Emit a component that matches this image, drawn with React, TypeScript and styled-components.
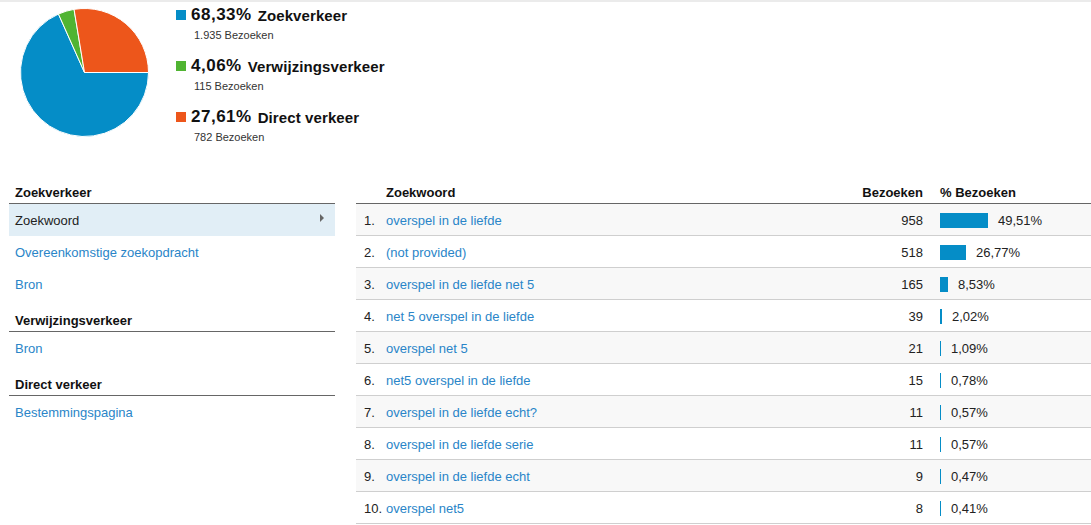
import React from 'react'
import styled, { createGlobalStyle } from 'styled-components'

const Colors = {
  blue: '#058dc7',
  green: '#50b432',
  orange: '#ed561b',
  link: '#2a85c8',
  text: '#222',
  rule: '#666',
  rowRule: '#cfcfcf',
  stripe: '#f8f8f8',
  selected: '#e1eef6',
}

const GlobalStyle = createGlobalStyle`
  html, body {
    margin: 0;
    padding: 0;
    background: #fff;
  }
  body {
    font-family: "Liberation Sans", Arial, sans-serif;
    font-size: 13px;
    color: ${Colors.text};
    border-top: 2px solid #ebebeb;
  }
`

const Page = styled.div`
  width: 1091px;
`

const Overview = styled.section`
  display: flex;
  gap: 27px;
  height: 170px;
  padding: 3px 0 0 20px;
  box-sizing: border-box;
`

const PieBox = styled.svg`
  margin-top: 3px;
  flex: none;
`

const Legend = styled.ul`
  list-style: none;
  margin: 0;
  padding: 0;
  display: flex;
  flex-direction: column;
  gap: 14px;
`

const LegendItem = styled.li`
  display: flex;
  flex-direction: column;
`

const LegendTitle = styled.div`
  display: flex;
  align-items: center;
  gap: 5px;
  height: 20px;
  font-weight: bold;
  color: #111;
`

const Swatch = styled.span<{ $color: string }>`
  width: 10px;
  height: 10px;
  background: ${(p) => p.$color};
`

const Percent = styled.span`
  font-size: 17px;
  letter-spacing: 0.5px;
  margin-right: 1px;
`

const Label = styled.span`
  font-size: 15px;
  letter-spacing: 0.1px;
`

const LegendSub = styled.div`
  margin-top: 3px;
  padding-left: 18px;
  font-size: 11px;
  line-height: 14px;
  color: #333;
`

const Main = styled.div`
  display: flex;
  gap: 21px;
  padding-left: 9px;
`

const Sidebar = styled.nav`
  width: 326px;
  flex: none;
`

const GroupHeader = styled.div`
  height: 32px;
  display: flex;
  align-items: flex-end;
  padding: 0 0 2px 6px;
  box-sizing: border-box;
  line-height: 16px;
  font-weight: bold;
  color: #111;
  border-bottom: 1px solid ${Colors.rule};
`

const NavItem = styled.div<{ $active?: boolean }>`
  height: 32px;
  box-sizing: border-box;
  padding: 1px 11px 0 6px;
  display: flex;
  justify-content: space-between;
  align-items: center;
  color: ${(p) => (p.$active ? Colors.text : Colors.link)};
  background: ${(p) => (p.$active ? Colors.selected : 'transparent')};
`

const Caret = styled.span`
  width: 0;
  height: 0;
  border-top: 4px solid transparent;
  border-bottom: 4px solid transparent;
  border-left: 4px solid #666;
  margin-top: -5px;
`

const Table = styled.div`
  flex: 1;
`

const Row = styled.div<{ $head?: boolean; $odd?: boolean }>`
  display: grid;
  grid-template-columns: 30px 1fr 100px 151px;
  height: 32px;
  box-sizing: border-box;
  align-items: ${(p) => (p.$head ? 'end' : 'center')};
  padding: ${(p) => (p.$head ? '0 0 2px' : '2px 0 0')};
  line-height: 16px;
  background: ${(p) => (p.$odd ? Colors.stripe : '#fff')};
  border-bottom: 1px solid ${(p) => (p.$head ? Colors.rule : Colors.rowRule)};
  font-weight: ${(p) => (p.$head ? 'bold' : 'normal')};
  color: ${(p) => (p.$head ? '#111' : Colors.text)};
`

const Index = styled.span`
  padding-left: 8px;
  white-space: nowrap;
`

const Keyword = styled.span`
  color: ${Colors.link};
`

const Visits = styled.span`
  text-align: right;
  padding-right: 17px;
`

const Share = styled.span`
  display: flex;
  align-items: center;
  gap: 10px;
`

const Bar = styled.span`
  height: 15px;
  margin-top: -1px;
  background: ${Colors.blue};
  flex: none;
`

const slices = [
  { value: 68.33, color: Colors.blue },
  { value: 4.06, color: Colors.green },
  { value: 27.61, color: Colors.orange },
]

const Pie: React.FC = () => {
  const cx = 64.5
  const cy = 64.5
  const r = 64
  let start = 0
  return (
    <PieBox width={129} height={129} viewBox="0 0 129 129">
      {slices.map((s) => {
        const a0 = (start / 100) * Math.PI * 2
        start += s.value
        const a1 = (start / 100) * Math.PI * 2
        const large = a1 - a0 > Math.PI ? 1 : 0
        const d = `M${cx},${cy} L${cx + r * Math.cos(a0)},${cy + r * Math.sin(a0)} A${r},${r} 0 ${large} 1 ${cx + r * Math.cos(a1)},${cy + r * Math.sin(a1)} Z`
        return <path key={s.color} d={d} fill={s.color} stroke="#fff" strokeWidth={1} />
      })}
    </PieBox>
  )
}

const legend = [
  { pct: '68,33%', label: 'Zoekverkeer', visits: '1.935 Bezoeken', color: Colors.blue },
  { pct: '4,06%', label: 'Verwijzingsverkeer', visits: '115 Bezoeken', color: Colors.green },
  { pct: '27,61%', label: 'Direct verkeer', visits: '782 Bezoeken', color: Colors.orange },
]

const keywords = [
  { kw: 'overspel in de liefde', visits: 958, pct: 49.51 },
  { kw: '(not provided)', visits: 518, pct: 26.77 },
  { kw: 'overspel in de liefde net 5', visits: 165, pct: 8.53 },
  { kw: 'net 5 overspel in de liefde', visits: 39, pct: 2.02 },
  { kw: 'overspel net 5', visits: 21, pct: 1.09 },
  { kw: 'net5 overspel in de liefde', visits: 15, pct: 0.78 },
  { kw: 'overspel in de liefde echt?', visits: 11, pct: 0.57 },
  { kw: 'overspel in de liefde serie', visits: 11, pct: 0.57 },
  { kw: 'overspel in de liefde echt', visits: 9, pct: 0.47 },
  { kw: 'overspel net5', visits: 8, pct: 0.41 },
]

const App: React.FC = () => {
  return (
    <Page>
      <GlobalStyle />
      <Overview>
        <Pie />
        <Legend>
          {legend.map((l) => (
            <LegendItem key={l.label}>
              <LegendTitle>
                <Swatch $color={l.color} />
                <Percent>{l.pct}</Percent>
                <Label>{l.label}</Label>
              </LegendTitle>
              <LegendSub>{l.visits}</LegendSub>
            </LegendItem>
          ))}
        </Legend>
      </Overview>

      <Main>
        <Sidebar>
          <GroupHeader>Zoekverkeer</GroupHeader>
          <NavItem $active>
            Zoekwoord
            <Caret />
          </NavItem>
          <NavItem>Overeenkomstige zoekopdracht</NavItem>
          <NavItem>Bron</NavItem>
          <GroupHeader>Verwijzingsverkeer</GroupHeader>
          <NavItem>Bron</NavItem>
          <GroupHeader>Direct verkeer</GroupHeader>
          <NavItem>Bestemmingspagina</NavItem>
        </Sidebar>

        <Table>
          <Row $head>
            <span />
            <span>Zoekwoord</span>
            <Visits>Bezoeken</Visits>
            <span>% Bezoeken</span>
          </Row>
          {keywords.map((k, i) => (
            <Row key={i} $odd={i % 2 === 0}>
              <Index>{i + 1}.</Index>
              <Keyword>{k.kw}</Keyword>
              <Visits>{k.visits}</Visits>
              <Share>
                <Bar style={{ width: Math.max(1, Math.round(k.pct * 0.97)) }} />
                {k.pct.toFixed(2).replace('.', ',')}%
              </Share>
            </Row>
          ))}
        </Table>
      </Main>
    </Page>
  )
}

export default App
